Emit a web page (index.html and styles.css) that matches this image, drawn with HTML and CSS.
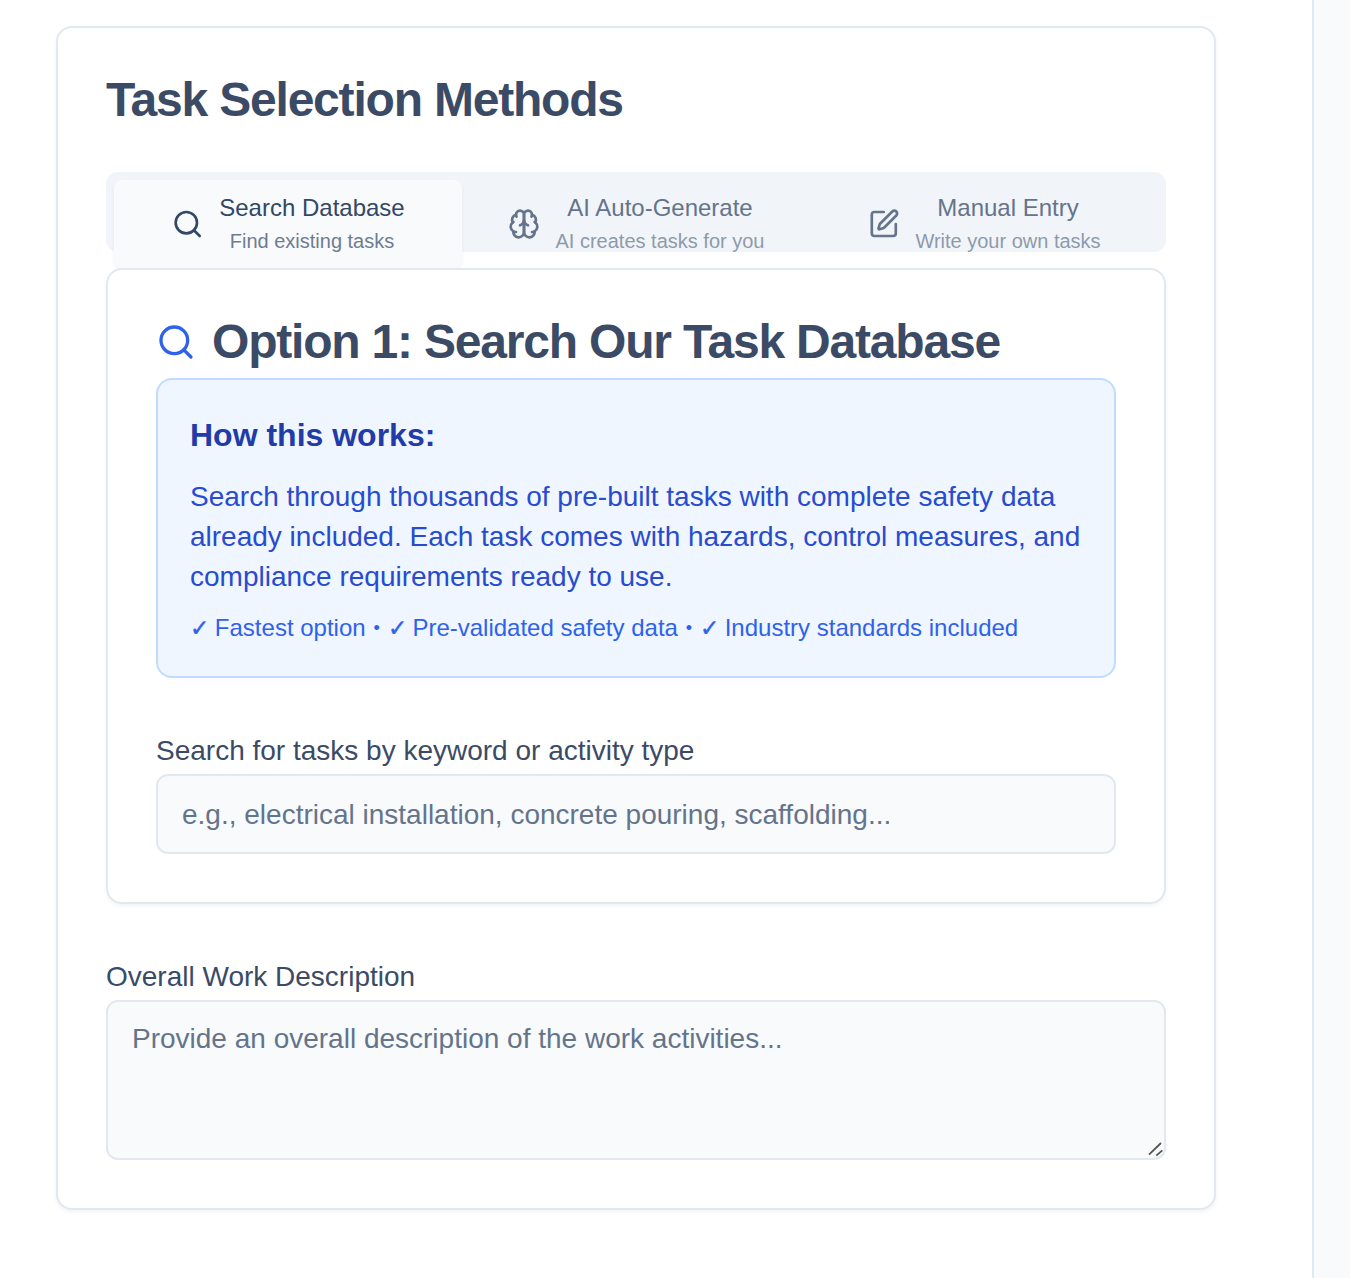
FILE: index.html
```html
<!DOCTYPE html>
<html lang="en">
<head>
<meta charset="utf-8">
<title>Task Selection Methods</title>
<link rel="stylesheet" href="styles.css">
</head>
<body>
<div class="page">
  <main class="content">
    <section class="card">
      <h2 class="heading">Task Selection Methods</h2>
      <div class="tabs" role="tablist">
        <button class="tab tab-active" role="tab">
          <svg class="icon" viewBox="0 0 24 24"><circle cx="11.500" cy="11" r="8"/><path d="m21.500 21-4.300-4.300"/></svg>
          <span class="tab-text"><span class="tab-title">Search Database</span><span class="tab-sub">Find existing tasks</span></span>
        </button>
        <button class="tab" role="tab">
          <svg class="icon" viewBox="0 0 24 24"><path d="M12 5a3 3 0 1 0-5.997.125 4 4 0 0 0-2.526 5.770 4 4 0 0 0 .556 6.588A4 4 0 1 0 12 18Z"/><path d="M12 5a3 3 0 1 1 5.997.125 4 4 0 0 1 2.526 5.770 4 4 0 0 1-.556 6.588A4 4 0 1 1 12 18Z"/><path d="M15 13a4.500 4.500 0 0 1-3-4 4.500 4.500 0 0 1-3 4"/><path d="M17.599 6.500a3 3 0 0 0 .399-1.375"/><path d="M6.003 5.125A3 3 0 0 0 6.401 6.500"/><path d="M3.477 10.896a4 4 0 0 1 .585-.396"/><path d="M19.938 10.500a4 4 0 0 1 .585.396"/><path d="M6 18a4 4 0 0 1-1.967-.516"/><path d="M19.967 17.484A4 4 0 0 1 18 18"/></svg>
          <span class="tab-text"><span class="tab-title">AI Auto-Generate</span><span class="tab-sub">AI creates tasks for you</span></span>
        </button>
        <button class="tab" role="tab">
          <svg class="icon" viewBox="-0.600 0 24 24"><path d="M12 3H5a2 2 0 0 0-2 2v14a2 2 0 0 0 2 2h14a2 2 0 0 0 2-2v-7"/><path d="M18.375 2.625a1 1 0 0 1 3 3l-9.013 9.014a2 2 0 0 1-.853.505l-2.873.84a.5.5 0 0 1-.62-.62l.84-2.873a2 2 0 0 1 .506-.852z"/></svg>
          <span class="tab-text"><span class="tab-title">Manual Entry</span><span class="tab-sub">Write your own tasks</span></span>
        </button>
      </div>
      <div class="panel">
        <h3 class="heading option">
          <svg class="icon icon-lg" viewBox="0 0 24 24"><circle cx="11" cy="11" r="8"/><path d="m21 21-4.300-4.300"/></svg>
          <span>Option 1: Search Our Task Database</span>
        </h3>
        <div class="info">
          <h4 class="info-title">How this works:</h4>
          <p class="info-body">Search through thousands of pre-built tasks with complete safety data already included. Each task comes with hazards, control measures, and compliance requirements ready to use.</p>
          <p class="info-points"><span class="check">✓</span> Fastest option <span class="dot">•</span> <span class="check">✓</span> Pre-validated safety data <span class="dot">•</span> <span class="check">✓</span> Industry standards included</p>
        </div>
        <label class="label" for="search">Search for tasks by keyword or activity type</label>
        <input class="field field-line" id="search" type="text" placeholder="e.g., electrical installation, concrete pouring, scaffolding...">
      </div>
      <label class="label" for="description">Overall Work Description</label>
      <div class="area">
        <textarea class="field field-area" id="description" placeholder="Provide an overall description of the work activities..."></textarea>
        <svg class="grip" viewBox="0 0 16 16"><path d="M1 12.700 13 1M8.300 13.700 14.300 8.300"/></svg>
      </div>
    </section>
  </main>
  <aside class="side"></aside>
</div>
</body>
</html>
```

FILE: styles.css
```css
* { box-sizing: border-box; }
body {
  margin: 0;
  background: #fff;
  color: #3b4b66;
  font-family: "Liberation Sans", Arial, Helvetica, sans-serif;
}
h2, h3, h4, p { margin: 0; }
.page { display: flex; height: 1278px; overflow: hidden; }
.content { width: 1312px; padding: 26px 96px 0 56px; }
.side { flex: 1; background: #f8fafc; border-left: 2px solid #e2e8f0; }
.card {
  height: 1184px;
  padding: 48px;
  background: #fff;
  border: 2px solid #e2e8f0;
  border-radius: 16px;
  box-shadow: 0 2px 4px rgba(0, 0, 0, .05);
}
.heading { font-size: 48px; line-height: 48px; font-weight: 700; letter-spacing: -1.2px; white-space: nowrap; }
.tabs {
  display: grid;
  grid-template-columns: repeat(3, 1fr);
  height: 80px;
  margin-top: 48px;
  padding: 8px;
  background: #f1f5f9;
  border-radius: 12px;
}
.tab {
  display: flex;
  align-items: center;
  justify-content: center;
  gap: 16px;
  height: 88px;
  padding: 12px 0;
  border: 0;
  border-radius: 8px;
  background: none;
  color: #64748b;
  font: inherit;
}
.tab-active { background: #f8fafc; color: #334766; box-shadow: 0 2px 4px rgba(0, 0, 0, .05); }
.icon { width: 32px; height: 32px; flex: none; fill: none; stroke: currentColor; stroke-width: 2; stroke-linecap: round; stroke-linejoin: round; }
.tab-text { display: flex; flex-direction: column; text-align: center; white-space: nowrap; }
.tab-title { font-size: 24px; line-height: 32px; }
.tab-sub { padding-top: 1px; font-size: 20px; line-height: 31px; opacity: .7; }
.tab-sub { line-height: 32px; margin-bottom: -1px; }
.panel {
  position: relative;
  height: 636px;
  margin-top: 16px;
  padding: 48px;
  border: 2px solid #e2e8f0;
  border-radius: 16px;
  background: #fff;
  box-shadow: 0 2px 4px rgba(0, 0, 0, .05);
}
.option { display: flex; align-items: center; gap: 16px; }
.icon-lg { width: 40px; height: 40px; color: #2f62eb; }
.info {
  height: 300px;
  margin-top: 12px;
  padding: 31px 32px;
  background: #eff6ff;
  border: 2px solid #bfdbfe;
  border-radius: 16px;
}
.info-title { color: #213ba8; font-size: 32px; line-height: 48px; }
.info-body { margin-top: 18px; color: #284bd0; font-size: 28px; line-height: 40px; }
.info-points { margin-top: 15px; color: #2f62eb; font-size: 24px; line-height: 32px; white-space: nowrap; }
.check {
  display: inline-block;
  width: 18.2px;
  height: 32px;
  font-size: 23px;
  vertical-align: top;
  -webkit-text-stroke: .5px currentColor;
}
.dot { display: inline-block; width: 8.600px; height: 32px; font-size: 18px; text-align: center; vertical-align: top; }
.label { display: block; margin-top: 59px; font-size: 28px; line-height: 28px; }
.field {
  display: block;
  width: 100%;
  height: 80px;
  margin-top: 9px;
  padding: 17px 24px 15px;
  border: 2px solid #e2e8f0;
  border-radius: 12px;
  background: #f8fafc;
  font: 28px/40px "Liberation Sans", Arial, sans-serif;
}
.field-line { padding: 18px 24px 16px; }
.field::placeholder { color: #64748b; opacity: 1; }
.field-area { height: 160px; resize: none; }
.area { position: relative; }
.grip { position: absolute; right: 2px; bottom: 2px; width: 16px; height: 16px; fill: none; stroke: #555; stroke-width: 1.8; }
```
